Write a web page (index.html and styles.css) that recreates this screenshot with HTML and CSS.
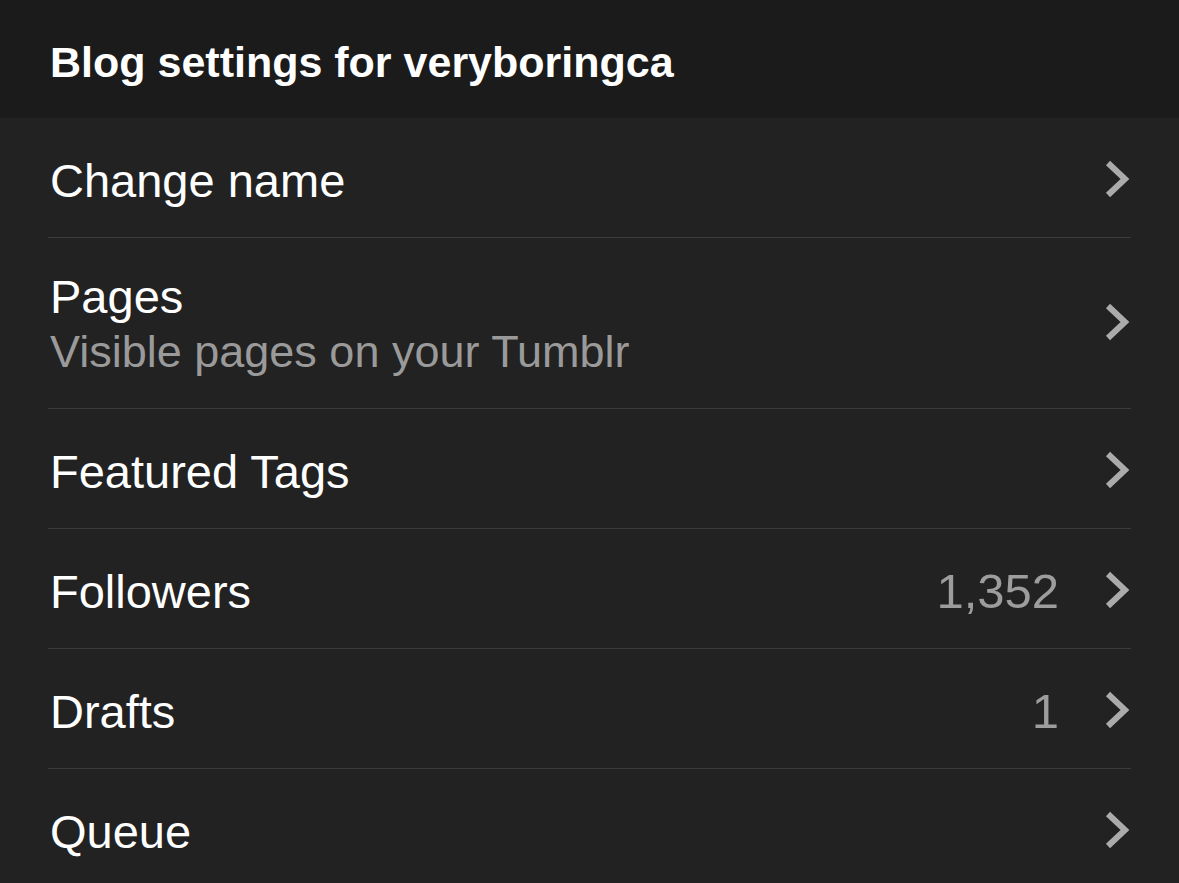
FILE: index.html
```html
<!DOCTYPE html>
<html lang="en">
<head>
<meta charset="utf-8">
<title>Blog settings</title>
<link rel="stylesheet" href="styles.css">
</head>
<body>
<div class="screen">
  <header class="topbar">
    <h1 class="title">Blog settings for veryboringca</h1>
  </header>
  <ul class="list">
    <li class="row">
      <div class="label"><span class="name">Change name</span></div>
      <svg class="chev" viewBox="0 0 28 40" width="28" height="40"><polyline points="4,4 21,20 4,36"/></svg>
    </li>
    <li class="row row-tall">
      <div class="label">
        <span class="name">Pages</span>
        <span class="sub">Visible pages on your Tumblr</span>
      </div>
      <svg class="chev" viewBox="0 0 28 40" width="28" height="40"><polyline points="4,4 21,20 4,36"/></svg>
    </li>
    <li class="row">
      <div class="label"><span class="name">Featured Tags</span></div>
      <svg class="chev" viewBox="0 0 28 40" width="28" height="40"><polyline points="4,4 21,20 4,36"/></svg>
    </li>
    <li class="row">
      <div class="label"><span class="name">Followers</span></div>
      <span class="value">1,352</span>
      <svg class="chev" viewBox="0 0 28 40" width="28" height="40"><polyline points="4,4 21,20 4,36"/></svg>
    </li>
    <li class="row">
      <div class="label"><span class="name">Drafts</span></div>
      <span class="value">1</span>
      <svg class="chev" viewBox="0 0 28 40" width="28" height="40"><polyline points="4,4 21,20 4,36"/></svg>
    </li>
    <li class="row">
      <div class="label"><span class="name">Queue</span></div>
      <svg class="chev" viewBox="0 0 28 40" width="28" height="40"><polyline points="4,4 21,20 4,36"/></svg>
    </li>
  </ul>
</div>
</body>
</html>
```
FILE: styles.css
```css
html, body {
  margin: 0;
  padding: 0;
  background: #222222;
  height: 100%;
  overflow: hidden;
}
body {
  font-family: "Liberation Sans", Arial, sans-serif;
  color: #ffffff;
}
.screen {
  width: 1179px;
  height: 883px;
  overflow: hidden;
  background: #222222;
}
.topbar {
  height: 118px;
  box-sizing: border-box;
  background: #1b1b1b;
  display: flex;
  align-items: center;
  padding: 6px 0 0 50px;
}
.title {
  margin: 0;
  font-size: 43px;
  font-weight: 700;
  line-height: normal;
  letter-spacing: 0;
}
.list {
  list-style: none;
  margin: 0;
  padding: 0 48px;
}
.row {
  display: flex;
  align-items: center;
  min-height: 120px;
  box-sizing: border-box;
  padding: 6px 0 0 2px;
  border-bottom: 1px solid #3b3b3b;
}
.row-tall {
  min-height: 171px;
  padding-top: 2px;
}
.label {
  flex: 1;
  display: flex;
  flex-direction: column;
}
.name {
  font-size: 47px;
  line-height: 55px;
  color: #ffffff;
}
.sub {
  font-size: 45px;
  line-height: 55px;
  color: #9a9a9a;
}
.value {
  font-size: 49px;
  line-height: 55px;
  color: #9d9d9d;
  margin-right: 45px;
}
.chev {
  flex: none;
  margin-top: -4px;
  margin-right: -1px;
}
.chev polyline {
  fill: none;
  stroke: #ababab;
  stroke-width: 6;
  stroke-linecap: butt;
  stroke-linejoin: miter;
}
```
